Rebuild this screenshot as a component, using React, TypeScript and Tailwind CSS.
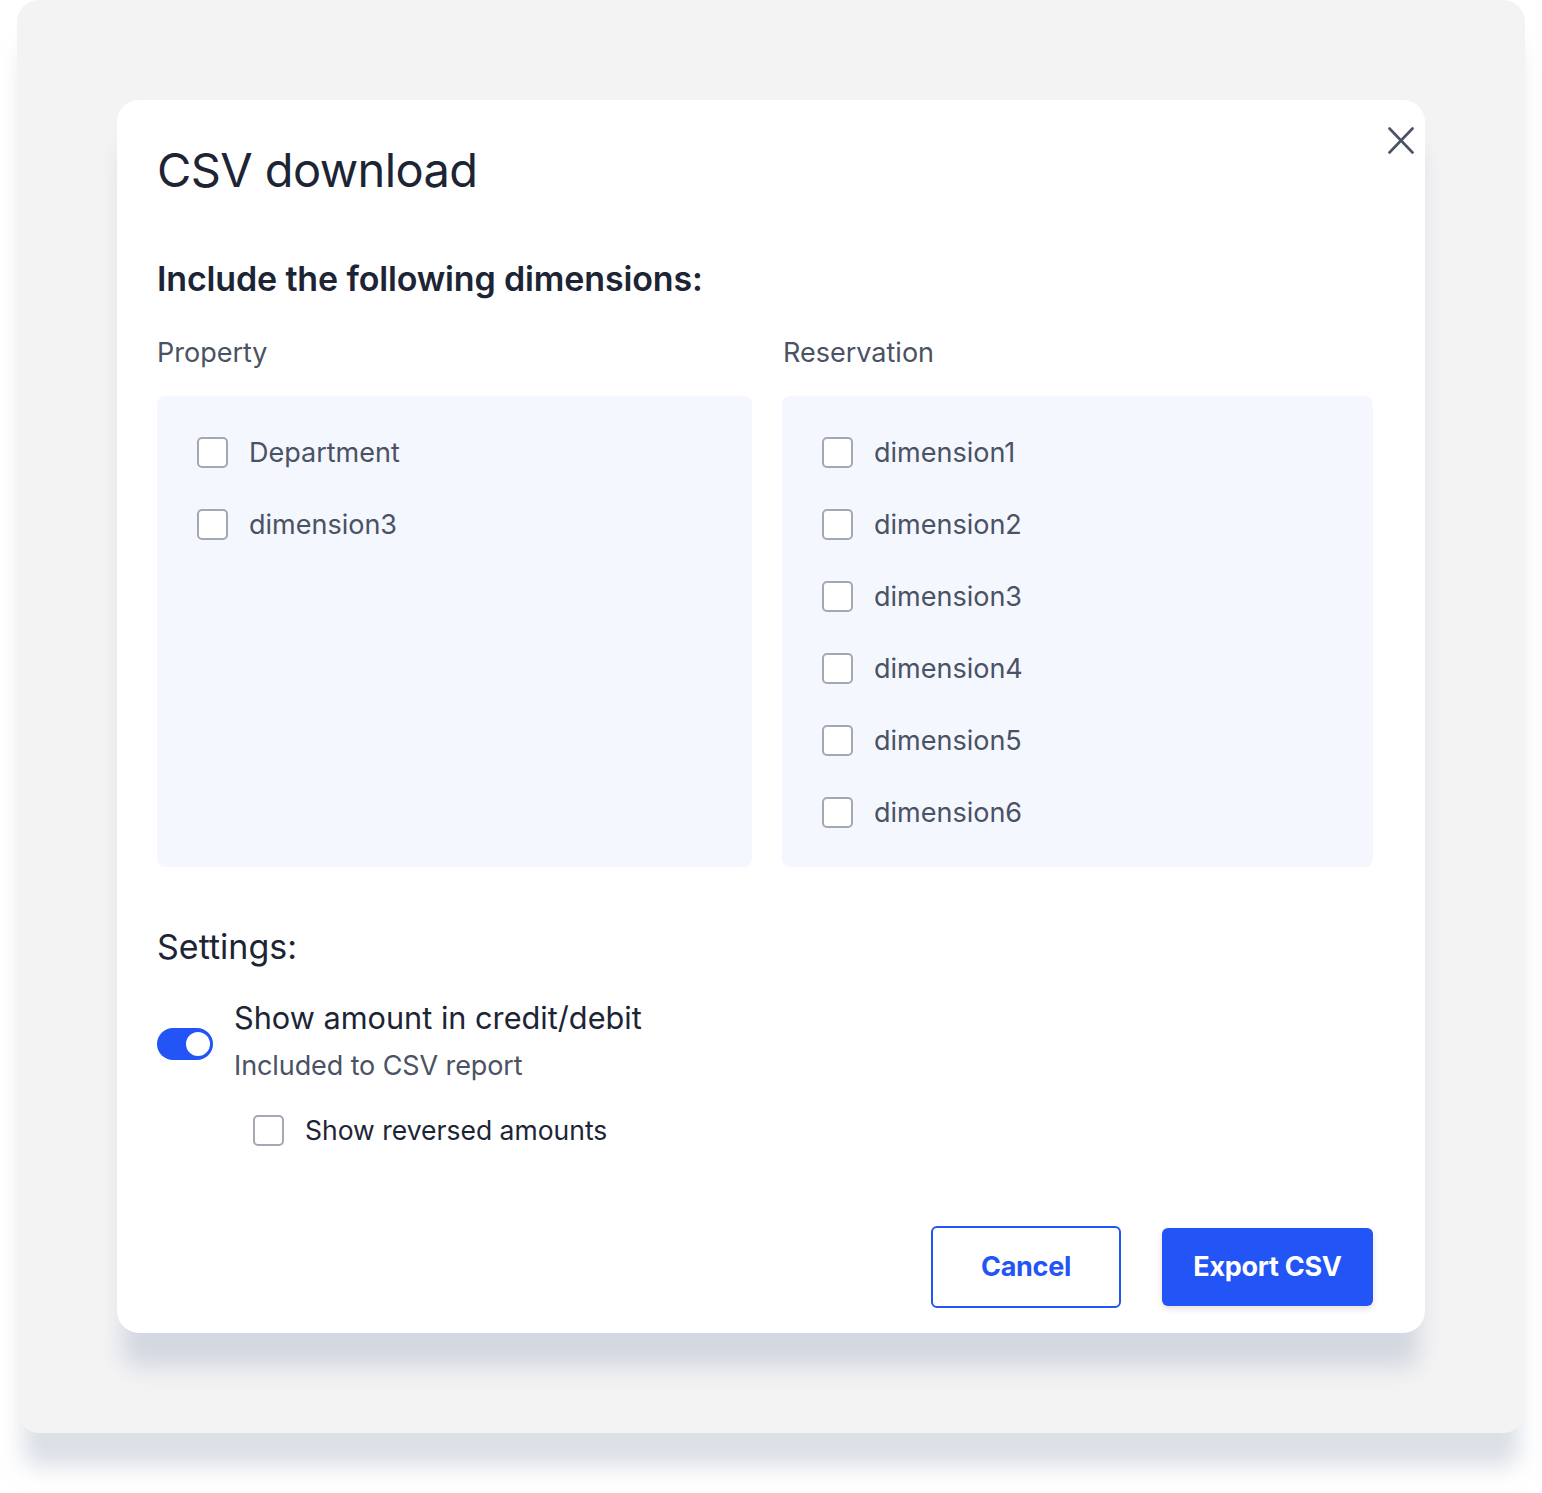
import React from "react";

function Box({ className = "" }: { className?: string }) {
  return (
    <span
      className={
        "block w-[31px] h-[31px] shrink-0 rounded-[5px] border-2 border-[#a3a8b3] bg-white " +
        className
      }
    />
  );
}

function Row({ label }: { label: string }) {
  return (
    <div className="flex items-center h-[32px] gap-[21px]">
      <Box />
      <span className="text-[27px] leading-[32px] text-[#4a5263] translate-y-[1px]">{label}</span>
    </div>
  );
}

export default function App() {
  const left = ["Department", "dimension3"];
  const right = ["dimension1", "dimension2", "dimension3", "dimension4", "dimension5", "dimension6"];
  return (
    <div
      className="w-full h-[1493px] bg-white pt-0"
      style={{ fontFamily: "Inter, 'Noto Sans', sans-serif" }}
    >
      <div className="ml-[17px] w-[1508px] h-[1433px] bg-[#f3f3f4] rounded-[22px] pt-[100px] pl-[100px] shadow-[0_40px_22px_-6px_rgba(190,196,210,0.55)]">
        <div className="relative w-[1308px] h-[1233px] bg-white rounded-[22px] pl-[40px] pr-[52px] pt-[40px] shadow-[0_40px_22px_-6px_rgba(190,196,210,0.6)]">
          <svg
            className="absolute left-[1271px] top-[27px]"
            width="26"
            height="27"
            viewBox="0 0 26 27"
            fill="none"
            stroke="#4a5263"
            strokeWidth="2.6"
            strokeLinecap="round"
          >
            <path d="M1.5 1.5L24.5 25.5M24.5 1.5L1.5 25.5" />
          </svg>

          <h1 className="text-[47px] leading-[60px] text-[#1d2535] font-normal tracking-[-0.6px]">
            CSV download
          </h1>
          <h2 className="mt-[59px] text-[34px] leading-[40px] font-semibold text-[#1d2535] tracking-[-0.15px]">
            Include the following dimensions:
          </h2>

          <div className="mt-[36px] grid grid-cols-[595px_591px] gap-x-[30px]">
            <div className="text-[27px] leading-[36px] text-[#4a5263]">Property</div>
            <div className="text-[27px] leading-[36px] text-[#4a5263] pl-[1px]">Reservation</div>
            <div className="mt-[25px] h-[471px] bg-[#f4f7fe] rounded-[8px] pl-[40px] pt-[40px] flex flex-col gap-[40px]">
              {left.map((l) => (
                <Row key={l} label={l} />
              ))}
            </div>
            <div className="mt-[25px] h-[471px] bg-[#f4f7fe] rounded-[8px] pl-[40px] pt-[40px] flex flex-col gap-[40px]">
              {right.map((l) => (
                <Row key={l} label={l} />
              ))}
            </div>
          </div>

          <div className="mt-[60px] text-[34px] leading-[40px] text-[#1d2535]">Settings:</div>

          <div className="mt-[32px] flex gap-[21px]">
            <div className="pt-[29px]">
              <div className="w-[56px] h-[32px] rounded-full bg-[#2354f6] flex items-center justify-end pr-[1px]">
                <div className="w-[28px] h-[28px] rounded-full bg-white border-2 border-[#2354f6]" />
              </div>
            </div>
            <div className="flex flex-col">
              <div className="text-[30.7px] leading-[38px] text-[#1d2535]">Show amount in credit/debit</div>
              <div className="mt-[11px] text-[27px] leading-[36px] text-[#4a5263] tracking-[-0.1px]">Included to CSV report</div>
              <div className="mt-[30px] ml-[19px] flex items-center h-[32px] gap-[21px]">
                <Box />
                <span className="text-[26.5px] leading-[32px] text-[#1d2535]">Show reversed amounts</span>
              </div>
            </div>
          </div>

          <div className="mt-[80px] flex justify-end gap-[41px]">
            <button className="w-[190px] h-[82px] rounded-[6px] border-2 border-[#2354f6] bg-white text-[27px] font-bold text-[#2354f6] tracking-[-0.3px]">
              Cancel
            </button>
            <button className="mt-[2px] w-[211px] h-[78px] rounded-[6px] bg-[#2354f6] text-[27px] font-bold text-white tracking-[-0.3px] shadow-[0_3px_6px_rgba(0,0,0,0.12)]">
              Export CSV
            </button>
          </div>
        </div>
      </div>
    </div>
  );
}
